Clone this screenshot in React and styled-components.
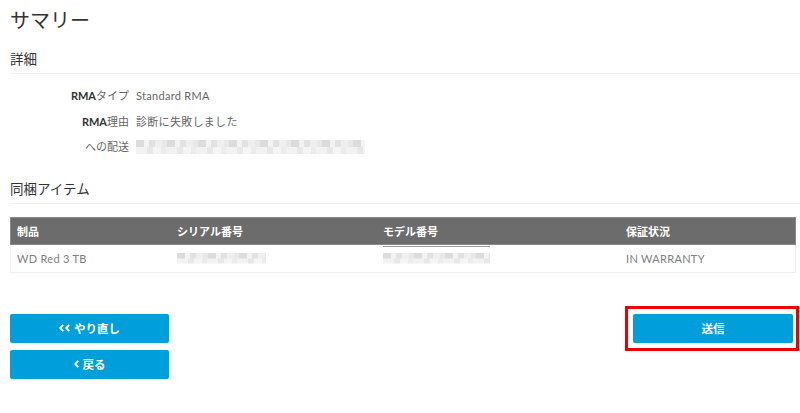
import React from 'react'
import styled, { createGlobalStyle } from 'styled-components'

const GlobalStyle = createGlobalStyle`
  body {
    margin: 0;
    background: #fff;
    font-family: Lato, "Noto Sans CJK JP", sans-serif;
    color: #333;
  }
`

const Page = styled.div`
  width: 800px;
  height: 413px;
  padding: 0 0 0 10px;
  box-sizing: border-box;
  overflow: hidden;
`

const Title = styled.h1`
  margin: 0;
  padding-top: 5px;
  font-size: 20px;
  font-weight: 400;
  line-height: 30px;
  color: #333;
`

const Section = styled.div`
  margin-top: ${(props) => props.top || 0}px;
`

const SectionTitle = styled.h2`
  margin: 0;
  font-size: 13.5px;
  font-weight: 400;
  line-height: 20px;
  color: #333;
  padding-bottom: 4px;
  border-bottom: 1px solid #f0f0f0;
`

const Details = styled.div`
  display: grid;
  grid-template-columns: 119px 1fr;
  column-gap: 7px;
  row-gap: 7px;
  margin-top: 13px;
  font-size: 11px;
  line-height: 18.5px;
`

const Label = styled.div`
  text-align: right;
  color: #666;
  b {
    color: #333;
    font-weight: 700;
  }
`

const Value = styled.div`
  color: #666;
  display: flex;
  align-items: center;
  letter-spacing: 0.3px;
`

const Blur = styled.div`
  width: ${(props) => props.w}px;
  height: ${(props) => props.h || 14}px;
  background:
    repeating-linear-gradient(90deg, #dcdcdc 0 8px, #f3f3f3 8px 13px, #e2e2e2 13px 19px, #efefef 19px 26px, #e6e8ec 26px 31px) top / 100% 50% no-repeat,
    repeating-linear-gradient(90deg, #f2f2f2 0 11px, #e8e8e8 11px 17px, #f5f5f5 17px 25px, #ececec 25px 30px) bottom / 100% 50% no-repeat;
`

const Table = styled.div`
  margin-top: 13px;
  width: 784px;
  font-size: 11px;
  border: 1px solid #eee;
  border-top: none;
`

const Row = styled.div`
  display: grid;
  grid-template-columns: 160px 206px 243px 1fr;
  align-items: center;
  height: ${(props) => (props.head ? 26 : 27)}px;
  background: ${(props) => (props.head ? '#6c6c6c' : '#fff')};
  border: ${(props) => (props.head ? '1px solid #8a8a8a' : 'none')};
  margin: ${(props) => (props.head ? '0 -1px' : '0')};
  color: ${(props) => (props.head ? '#fff' : '#808080')};
  font-weight: ${(props) => (props.head ? 700 : 400)};
  letter-spacing: ${(props) => (props.head ? 0 : 0.3)}px;
`

const Cell = styled.div`
  padding-left: 6px;
  position: relative;
  display: flex;
  align-items: center;
  height: 100%;
`

const Underline = styled.div`
  position: absolute;
  left: 6px;
  top: 1px;
  width: 107px;
  height: 1px;
  background: #9a9a9a;
`

const Actions = styled.div`
  display: flex;
  justify-content: space-between;
  align-items: flex-start;
  margin-top: 33px;
  width: 789px;
`

const Stack = styled.div`
  display: flex;
  flex-direction: column;
  gap: 7px;
  padding-top: 8px;
`

const Button = styled.button`
  width: ${(props) => props.w || 159}px;
  height: 29px;
  border: none;
  border-radius: 2px;
  background: #009fdb;
  color: #fff;
  font-family: Lato, "Noto Sans CJK JP", sans-serif;
  font-size: 11.5px;
  font-weight: 700;
  cursor: pointer;
  display: flex;
  align-items: center;
  justify-content: center;
  gap: 3px;
`

const Chevrons = styled.span`
  display: inline-flex;
  gap: 1px;
  margin-right: 1px;
`

const Highlight = styled.div`
  border: 3px solid #ee0000;
  padding: 5px 3px 5px 5px;
`

const Chevron = () => (
  <svg width="5" height="8" viewBox="0 0 5 8">
    <path d="M4.2 0.8 L1.3 4 L4.2 7.2" fill="none" stroke="#fff" strokeWidth="2" />
  </svg>
)

const App = () => {
  return (
    <Page>
      <GlobalStyle />
      <Title>サマリー</Title>
      <Section top={14}>
        <SectionTitle>詳細</SectionTitle>
        <Details>
          <Label><b>RMA</b>タイプ</Label>
          <Value>Standard RMA</Value>
          <Label><b>RMA</b>理由</Label>
          <Value>診断に失敗しました</Value>
          <Label>への配送</Label>
          <Value><Blur w={229} /></Value>
        </Details>
      </Section>
      <Section top={22}>
        <SectionTitle>同梱アイテム</SectionTitle>
        <Table>
          <Row head>
            <Cell>制品</Cell>
            <Cell>シリアル番号</Cell>
            <Cell>モデル番号</Cell>
            <Cell>保証状況</Cell>
          </Row>
          <Row>
            <Cell>WD Red 3 TB</Cell>
            <Cell><Blur w={89} h={11} /></Cell>
            <Cell><Underline /><Blur w={107} h={11} /></Cell>
            <Cell>IN WARRANTY</Cell>
          </Row>
        </Table>
      </Section>
      <Actions>
        <Stack>
          <Button>
            <Chevrons><Chevron /><Chevron /></Chevrons>
            やり直し
          </Button>
          <Button>
            <Chevrons><Chevron /></Chevrons>
            戻る
          </Button>
        </Stack>
        <Highlight>
          <Button w={160}>送信</Button>
        </Highlight>
      </Actions>
    </Page>
  )
}

export default App
